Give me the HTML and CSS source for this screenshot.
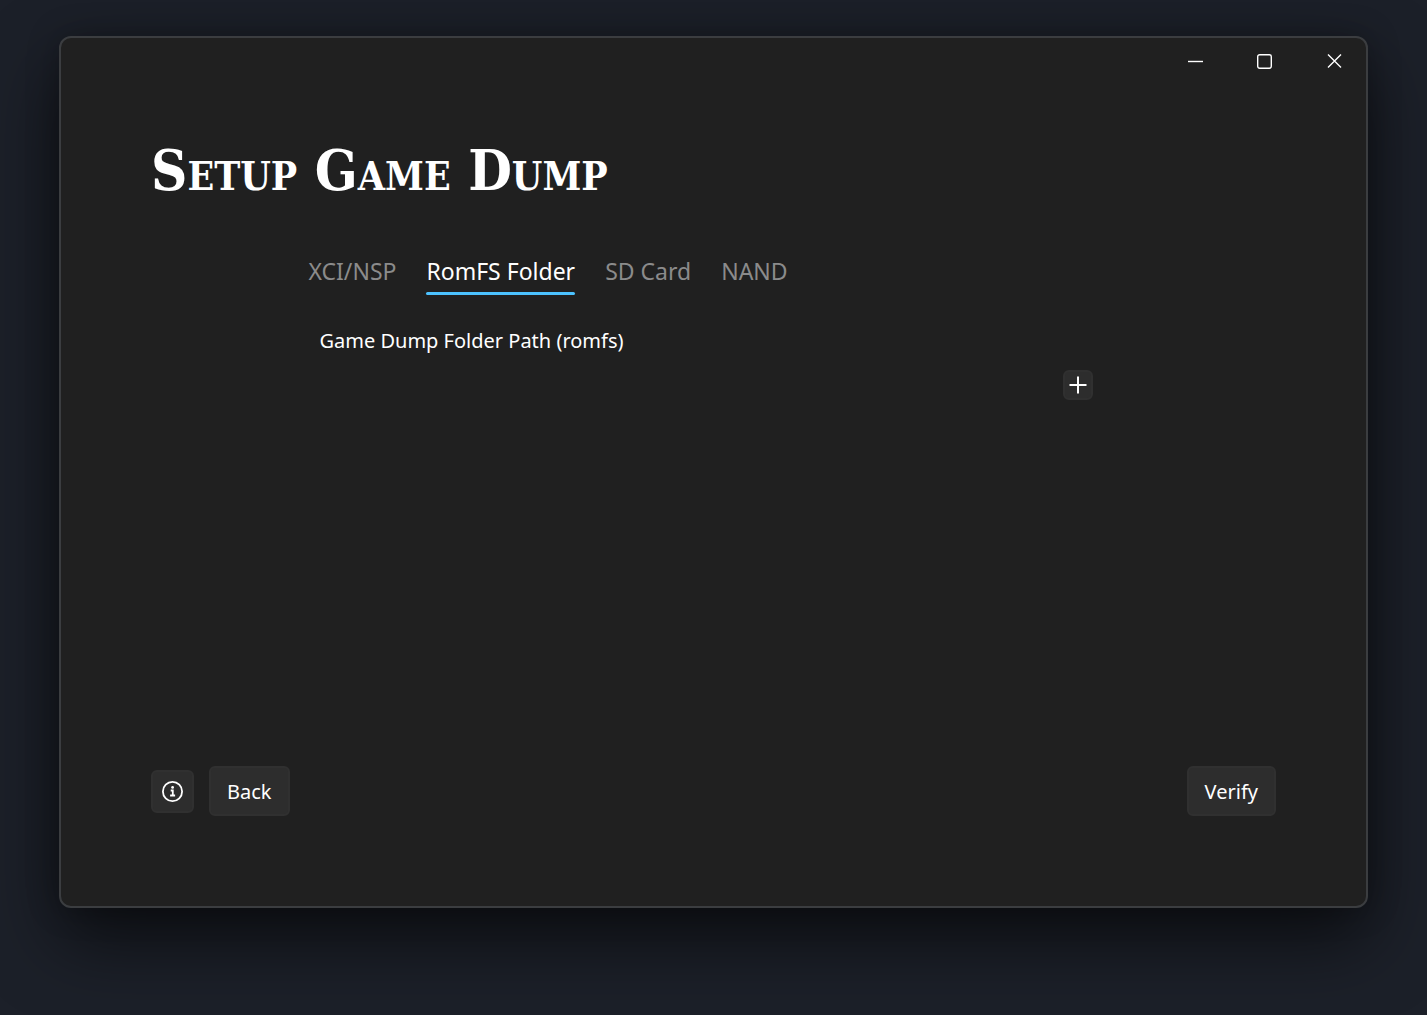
FILE: index.html
```html
<!DOCTYPE html>
<html lang="en">
<head>
<meta charset="utf-8">
<meta name="viewport" content="width=device-width, initial-scale=1">
<title>Setup Game Dump</title>
<link rel="stylesheet" href="styles.css">
</head>
<body>
<div class="window">
  <header class="titlebar">
    <button class="caption-button" type="button" aria-label="Minimize">
      <svg width="16" height="16" viewBox="0 0 16 16"><path d="M0 8.5h15"/></svg>
    </button>
    <button class="caption-button" type="button" aria-label="Maximize">
      <svg width="16" height="16" viewBox="0 0 16 16"><rect x=".7" y="1.7" width="13.6" height="13.6" rx="2"/></svg>
    </button>
    <button class="caption-button" type="button" aria-label="Close">
      <svg width="16" height="16" viewBox="0 0 16 16"><path d="M2 1.5l13 13M15 1.5l-13 13"/></svg>
    </button>
  </header>
  <main class="page">
    <h1 class="title">Setup Game Dump</h1>
    <section class="setup">
      <div class="tabs" role="tablist">
        <button class="tab" type="button" role="tab" aria-selected="false">XCI/NSP</button>
        <button class="tab tab-active" type="button" role="tab" aria-selected="true">RomFS Folder</button>
        <button class="tab" type="button" role="tab" aria-selected="false">SD Card</button>
        <button class="tab" type="button" role="tab" aria-selected="false">NAND</button>
      </div>
      <div class="panel" role="tabpanel">
        <h2 class="label" id="path-label">Game Dump Folder Path (romfs)</h2>
        <button class="button add-button" type="button" aria-label="Add folder" aria-describedby="path-label">
          <svg width="18" height="18" viewBox="0 0 18 18"><path d="M9 .5v17M.5 9h17"/></svg>
        </button>
      </div>
    </section>
    <footer class="actions">
      <button class="button info-button" type="button" aria-label="Information">
        <svg width="23" height="23" viewBox="0 0 23 23"><circle cx="11.5" cy="11.5" r="9.6"/><path d="M9.7 10.5h2.1v4.8M9.1 15.5h5"/><circle class="dot" cx="11.6" cy="7.4" r="1.4"/></svg>
      </button>
      <button class="button text-button" type="button">Back</button>
      <button class="button text-button verify-button" type="button">Verify</button>
    </footer>
  </main>
</div>
</body>
</html>
```
FILE: styles.css
```css
* {
  box-sizing: border-box;
}

body {
  display: flex;
  min-height: 100vh;
  margin: 0;
  padding: 36px 59px 107px;
  background: #1c2029;
  color: #fff;
  font-family: "Noto Sans", "Open Sans", sans-serif;
}

button {
  margin: 0;
  padding: 0;
  border: 0;
  background: none;
  color: inherit;
  font: inherit;
}

svg {
  display: block;
  fill: none;
  stroke: #fff;
}

.window {
  display: flex;
  flex: 1;
  flex-direction: column;
  min-width: 0;
  border: 2px solid #3b3d40;
  border-radius: 12px;
  background: #202020;
  box-shadow: 0 32px 72px rgba(0, 0, 0, 0.6), 0 0 32px rgba(0, 0, 0, 0.25);
}

.titlebar {
  display: flex;
  justify-content: flex-end;
  gap: 5px;
}

.caption-button {
  display: grid;
  place-items: center;
  width: 64px;
  height: 46px;
}

.caption-button svg {
  stroke-width: 1.4;
}

.page {
  display: flex;
  flex: 1;
  flex-direction: column;
  padding: 50px 90px 90px;
}

.title {
  margin: 0;
  font-family: "DejaVu Serif Condensed", "DejaVu Serif", serif;
  font-size: 56px;
  font-variant: small-caps;
  font-weight: 700;
  line-height: 72px;
}

.setup {
  width: 72%;
  margin: 45px auto 0;
}

.tabs {
  display: flex;
  flex-wrap: wrap;
  gap: 30px;
}

.tab {
  padding-bottom: 1px;
  color: #8b8b8b;
  font-size: 23px;
  line-height: 40px;
}

.tab::after {
  content: "";
  display: block;
  height: 3px;
  border-radius: 2px;
}

.tab-active {
  padding-bottom: 0;
  color: #fff;
}

.tab-active::after {
  margin-top: 1px;
  background: #4cc2ff;
}

.panel {
  display: flex;
  flex-direction: column;
  gap: 14px;
  padding: 31px 26px 0 11px;
}

.label {
  margin: 0;
  font-size: 20px;
  font-weight: 400;
  line-height: 30px;
}

.button {
  display: grid;
  place-items: center;
  border: 2px solid #303030;
  border-radius: 6px;
  background: #2d2d2d;
}

.add-button {
  align-self: flex-end;
  width: 30px;
  height: 30px;
}

.add-button svg {
  stroke-width: 2;
}

.actions {
  display: flex;
  align-items: center;
  gap: 15px;
  margin-top: auto;
}

.info-button {
  width: 43px;
  height: 43px;
}

.info-button svg {
  stroke-width: 1.8;
}

.dot {
  fill: #fff;
  stroke: none;
}

.text-button {
  height: 50px;
  padding: 0 16px;
  font-size: 20px;
}

.verify-button {
  margin-left: auto;
}
```
